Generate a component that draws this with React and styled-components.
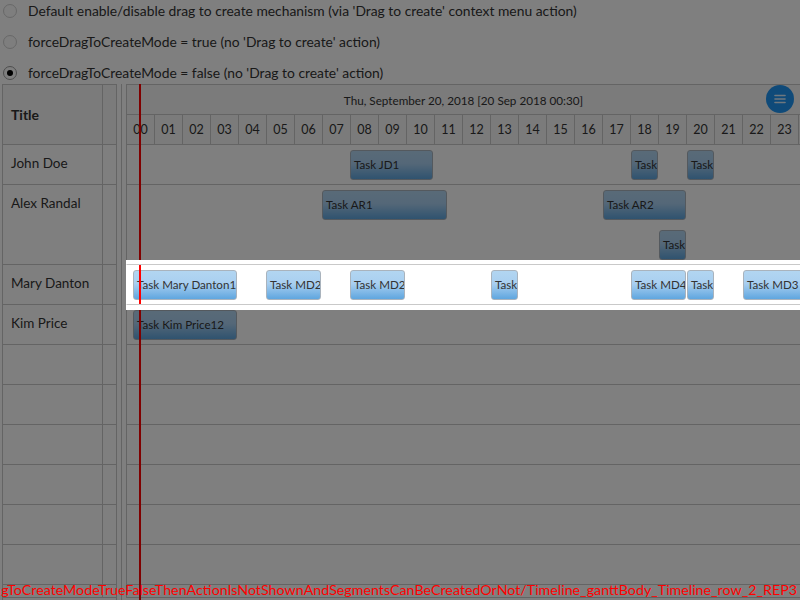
import React from 'react';
import styled, { createGlobalStyle } from 'styled-components';

const LINE = '#c9c9c9';
const HEAD = '#f6f6f6';
const HOUR = 28;

const Global = createGlobalStyle`
  html, body { margin: 0; padding: 0; background: #fff; }
  body { font-family: Lato, "Open Sans", "Liberation Sans", sans-serif; }
`;

const Page = styled.div`
  position: relative;
  width: 800px;
  height: 600px;
  overflow: hidden;
  background: #fff;
  color: #333;
`;

const Options = styled.div`
  display: flex;
  flex-direction: column;
  gap: 9px;
  padding-left: 3px;
  height: 84px;
`;

const OptionRow = styled.label`
  display: flex;
  align-items: center;
  gap: 11px;
  height: 21px;
  margin-bottom: 1px;
  font-size: 13.85px;
  color: #333;
`;

const Radio = styled.span`
  width: 14px;
  height: 14px;
  box-sizing: border-box;
  border-radius: 50%;
  border: 1px solid ${(p) => (p.$checked ? '#9c9c9c' : '#d0d0d0')};
  background: #fcfcfc;
  display: flex;
  align-items: center;
  justify-content: center;
  &::after {
    content: '';
    width: 6px;
    height: 6px;
    border-radius: 50%;
    background: #000;
    display: ${(p) => (p.$checked ? 'block' : 'none')};
  }
`;

const Table = styled.div`
  display: flex;
  margin-left: 2px;
  height: 516px;
`;

const LeftPane = styled.div`
  width: 115px;
  flex-shrink: 0;
  box-sizing: border-box;
  border-left: 1px solid ${LINE};
  border-right: 1px solid ${LINE};
  display: flex;
  flex-direction: column;
`;

const LeftHeader = styled.div`
  display: flex;
  height: 61px;
  flex-shrink: 0;
  box-sizing: border-box;
  border-top: 1px solid ${LINE};
  border-bottom: 1px solid ${LINE};
  background: ${HEAD};
`;

const NameCell = styled.div`
  width: 100px;
  flex-shrink: 0;
  box-sizing: border-box;
  border-right: 1px solid ${LINE};
  padding-left: 8px;
  font-size: ${(p) => (p.$head ? '14px' : '13.5px')};
  font-weight: ${(p) => (p.$head ? 700 : 400)};
  line-height: ${(p) => (p.$head ? '59px' : '36px')};
  color: #333;
  white-space: nowrap;
`;

const LeftBody = styled.div`
  flex: 1;
  overflow: hidden;
  display: flex;
  flex-direction: column;
`;

const LeftRow = styled.div`
  display: flex;
  height: ${(p) => p.$h}px;
  flex-shrink: 0;
  box-sizing: border-box;
  border-bottom: 1px solid ${LINE};
`;

const Footer = styled.div`
  height: 3px;
  flex-shrink: 0;
  box-sizing: border-box;
  border-top: 1px solid ${LINE};
`;

const Splitter = styled.div`
  width: 4px;
  flex-shrink: 0;
  border-right: 1px solid ${LINE};
  margin-right: 4px;
`;

const Timeline = styled.div`
  width: 674px;
  flex-shrink: 0;
  position: relative;
  display: flex;
  flex-direction: column;
  overflow: hidden;
`;

const TimeHeader = styled.div`
  flex-shrink: 0;
  border-top: 1px solid ${LINE};
  background: ${HEAD};
`;

const DateRow = styled.div`
  position: relative;
  height: 30px;
  box-sizing: border-box;
  border-left: 1px solid ${LINE};
  border-bottom: 1px solid ${LINE};
  display: flex;
  align-items: center;
  justify-content: center;
  font-size: 11.7px;
  color: #333;
`;

const MenuButton = styled.div`
  position: absolute;
  right: 6px;
  top: 0;
  width: 28px;
  height: 28px;
  border-radius: 50%;
  background: #1f95f2;
  display: flex;
  align-items: center;
  justify-content: center;
  z-index: 3;
`;

const HourRow = styled.div`
  display: flex;
  height: 30px;
  box-sizing: border-box;
  border-bottom: 1px solid ${LINE};
`;

const HourCell = styled.div`
  width: ${HOUR}px;
  flex-shrink: 0;
  box-sizing: border-box;
  border-left: 1px solid ${LINE};
  text-align: center;
  line-height: 29px;
  font-size: 12.5px;
  color: #333;
`;

const TimeBody = styled.div`
  flex: 1;
  overflow: hidden;
  display: flex;
  flex-direction: column;
`;

const TRow = styled.div`
  position: relative;
  height: ${(p) => p.$h}px;
  flex-shrink: 0;
  box-sizing: border-box;
  border-left: 1px solid ${LINE};
  border-bottom: 1px solid ${LINE};
`;

const HighlightRow = styled.div`
  position: relative;
  z-index: 11;
  height: 41px;
  margin-top: -1px;
  flex-shrink: 0;
  box-sizing: border-box;
  background: #fff;
  border-top: 1px solid ${LINE};
  border-bottom: 1px solid ${LINE};
  border-left: 1px solid #fff;
  box-shadow: 0 -4px 0 0 #fff, 0 5px 0 0 #fff;
`;

const Bar = styled.div`
  position: absolute;
  height: 30px;
  box-sizing: border-box;
  border: 1px solid #a9b3bd;
  border-radius: 3px;
  background: linear-gradient(to bottom, #b2d5f1 0%, #a9cff0 45%, #5fa6df 100%);
  padding-left: 3px;
  font-size: 11.6px;
  line-height: 28px;
  color: #333;
  white-space: nowrap;
  overflow: hidden;
`;

const Marker = styled.div`
  position: absolute;
  top: 0;
  bottom: 0;
  left: ${(p) => p.$left}px;
  width: 2px;
  background: #ff0000;
  z-index: 2;
`;

const Overlay = styled.div`
  position: absolute;
  inset: 0;
  background: rgba(0, 0, 0, 0.5);
  z-index: 10;
`;

const Status = styled.div`
  position: absolute;
  left: 0;
  right: 3px;
  bottom: 2px;
  display: flex;
  justify-content: flex-end;
  overflow: hidden;
  white-space: nowrap;
  color: #ff0000;
  font-size: 14.25px;
  line-height: 17px;
  z-index: 20;
`;

const options = [
  { label: "Default enable/disable drag to create mechanism (via 'Drag to create' context menu action)", checked: false },
  { label: "forceDragToCreateMode = true (no 'Drag to create' action)", checked: false },
  { label: "forceDragToCreateMode = false (no 'Drag to create' action)", checked: true },
];

const rows = [
  { name: 'John Doe', h: 40, tasks: [
    { t: 'Task JD1', s: 8, d: 3 },
    { t: 'Task', s: 18, d: 1 },
    { t: 'Task', s: 20, d: 1 },
  ] },
  { name: 'Alex Randal', h: 80, tasks: [
    { t: 'Task AR1', s: 7, d: 4.5 },
    { t: 'Task AR2', s: 17, d: 3 },
    { t: 'Task', s: 19, d: 1, lane: 1 },
  ] },
  { name: 'Mary Danton', h: 40, highlight: true, tasks: [
    { t: 'Task Mary Danton1', s: 0.25, d: 3.75 },
    { t: 'Task MD2', s: 5, d: 2 },
    { t: 'Task MD2', s: 8, d: 2 },
    { t: 'Task', s: 13, d: 1 },
    { t: 'Task MD4', s: 18, d: 2 },
    { t: 'Task', s: 20, d: 1 },
    { t: 'Task MD3', s: 22, d: 3 },
  ] },
  { name: 'Kim Price', h: 40, tasks: [
    { t: 'Task Kim Price12', s: 0.25, d: 3.75 },
  ] },
  ...Array.from({ length: 7 }, () => ({ name: '', h: 40, tasks: [] })),
];

const hours = Array.from({ length: 25 }, (_, i) => String(i % 24).padStart(2, '0'));

function Tasks({ tasks }) {
  return tasks.map((k, i) => (
    <Bar
      key={i}
      style={{
        left: k.s * HOUR - 1 + (k.s >= 13 ? 1 : 0),
        width: k.d * HOUR - 1,
        top: 5 + (k.lane || 0) * 40,
      }}
    >
      {k.t}
    </Bar>
  ));
}

function MenuIcon() {
  return (
    <svg width="12" height="10" viewBox="0 0 12 10">
      <g stroke="rgba(255,255,255,0.85)" strokeWidth="1.6" strokeLinecap="round">
        <line x1="1" y1="1.5" x2="11" y2="1.5" />
        <line x1="1" y1="5" x2="11" y2="5" />
        <line x1="1" y1="8.5" x2="11" y2="8.5" />
      </g>
    </svg>
  );
}

export default function App() {
  return (
    <Page>
      <Global />
      <Options>
        {options.map((o, i) => (
          <OptionRow key={i}>
            <Radio $checked={o.checked} />
            {o.label}
          </OptionRow>
        ))}
      </Options>
      <Table>
        <LeftPane>
          <LeftHeader>
            <NameCell $head>Title</NameCell>
          </LeftHeader>
          <LeftBody>
            {rows.map((r, i) => (
              <LeftRow key={i} $h={r.h}>
                <NameCell>{r.name}</NameCell>
              </LeftRow>
            ))}
          </LeftBody>
          <Footer />
        </LeftPane>
        <Splitter />
        <Timeline>
          <TimeHeader>
            <DateRow>
              Thu, September 20, 2018 [20 Sep 2018 00:30]
              <MenuButton>
                <MenuIcon />
              </MenuButton>
            </DateRow>
            <HourRow>
              {hours.map((h, i) => (
                <HourCell key={i}>{h}</HourCell>
              ))}
            </HourRow>
          </TimeHeader>
          <TimeBody>
            {rows.map((r, i) =>
              r.highlight ? (
                <HighlightRow key={i}>
                  <Tasks tasks={r.tasks} />
                  <Marker $left={12} />
                </HighlightRow>
              ) : (
                <TRow key={i} $h={r.h}>
                  <Tasks tasks={r.tasks} />
                </TRow>
              )
            )}
          </TimeBody>
          <Footer />
          <Marker $left={13} />
        </Timeline>
      </Table>
      <Overlay />
      <Status>
        forceDragToCreateModeTrueFalseThenActionIsNotShownAndSegmentsCanBeCreatedOrNot/Timeline_ganttBody_Timeline_row_2_REP3
      </Status>
    </Page>
  );
}
